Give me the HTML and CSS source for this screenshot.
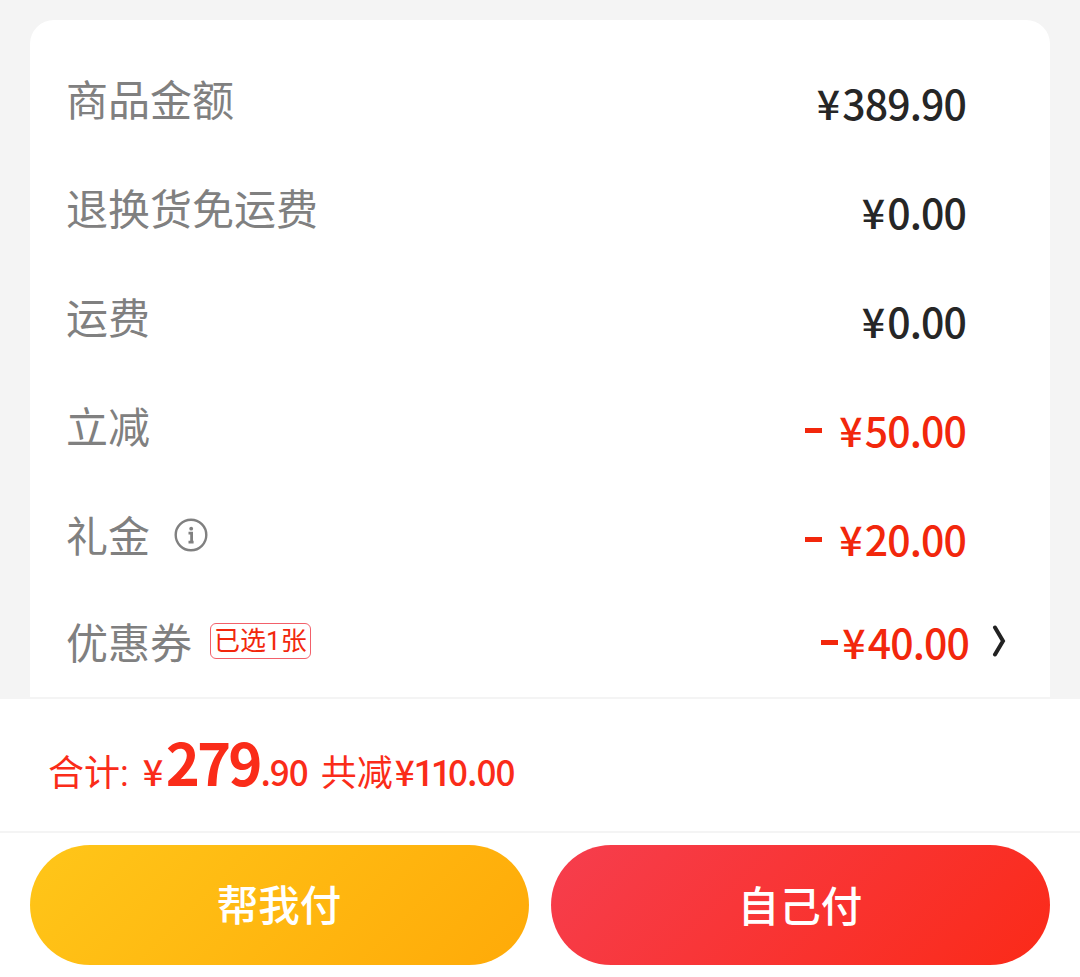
FILE: index.html
```html
<!DOCTYPE html>
<html lang="zh-CN">
  <head>
    <meta charset="UTF-8" />
    <meta name="viewport" content="width=device-width, initial-scale=1.0" />
    <title>确认订单</title>
    <link rel="stylesheet" href="styles.css">
  </head>
  <body>
    <main class="page">
      <section class="card">
        <div class="row">
          <span class="label">商品金额</span>
          <span class="price"><span class="yen">¥</span>389.90</span>
        </div>
        <div class="row">
          <span class="label">退换货免运费</span>
          <span class="price"><span class="yen">¥</span>0.00</span>
        </div>
        <div class="row">
          <span class="label">运费</span>
          <span class="price"><span class="yen">¥</span>0.00</span>
        </div>
        <div class="row">
          <span class="label">立减</span>
          <span class="price minus"><i class="dash"></i><span class="yen">¥</span>50.00</span>
        </div>
        <div class="row">
          <span class="label">礼金</span>
          <svg class="info" viewBox="0 0 34 34">
            <circle cx="17" cy="17" r="15.3" fill="none" stroke="#808080" stroke-width="2.4" />
            <circle cx="17.2" cy="10.7" r="1.9" fill="#808080" />
            <path d="M14.5 15.2H17.6V24M14.5 24.2H19.6" fill="none" stroke="#808080" stroke-width="2.8" />
          </svg>
          <span class="price minus"><i class="dash"></i><span class="yen">¥</span>20.00</span>
        </div>
        <div class="row coupon">
          <span class="label">优惠券</span>
          <span class="tag">已选1张</span>
          <span class="price minus"><i class="dash"></i><span class="yen">¥</span>40.00</span>
          <svg class="arrow" viewBox="0 0 14 32">
            <path d="M3 2.5L11 16L3 29.5" fill="none" stroke="#222" stroke-width="4" stroke-linecap="round" />
          </svg>
        </div>
      </section>
    </main>
    <section class="total">
      <span class="total-label">合计:</span>
      <span class="total-yen">¥</span>
      <span class="amount">279</span>
      <span class="cents">.90</span>
      <span class="saved">共减</span>
      <span class="saved-num">¥<span class="ones">11</span>0.00</span>
    </section>
    <footer class="actions">
      <button class="btn friend">帮我付</button>
      <button class="btn self">自己付</button>
    </footer>
  </body>
</html>
```

FILE: styles.css
```css
* {
  box-sizing: border-box;
}
body {
  margin: 0;
  height: 977px;
  overflow: hidden;
  background-color: #fff;
  font-family: Roboto, "Noto Sans CJK SC", sans-serif;
}
.page {
  height: 697px;
  padding: 20px 30px 0;
  background-color: #f4f4f4;
}
.card {
  height: 677px;
  padding: 27px 37px 0 36px;
  background-color: #fff;
  border-radius: 24px 24px 0 0;
}

/************************
  PRICE ROWS
************************/
.row {
  display: flex;
  align-items: center;
  height: 109px;
  padding-right: 46px;
}
.label {
  color: #808080;
  font-size: 42px;
  line-height: 60px;
}
.price,
.total-yen,
.amount,
.cents,
.saved-num {
  font-family: "Noto Sans CJK SC", sans-serif;
  font-weight: 500;
}
.price {
  display: flex;
  align-items: center;
  margin-left: auto;
  padding: 1px 1px 0 0;
  color: #262626;
  font-size: 41px;
  line-height: 50px;
  letter-spacing: -0.9px;
}
.yen {
  margin-right: 3px;
}
.minus {
  color: #f2270c;
}
.dash {
  width: 17px;
  height: 5px;
  margin: 3px 17px 0 0;
  background-color: #f2270c;
}
.info {
  width: 34px;
  height: 34px;
  margin: 0 0 6px 24px;
}
.coupon {
  height: 105px;
  padding-right: 7px;
}
.coupon .price {
  padding-bottom: 9px;
}
.coupon .dash {
  margin-right: 4px;
}
.tag {
  height: 36px;
  margin: 0 0 7px 18px;
  padding: 0 3px;
  border: 1px solid #f2606a;
  border-radius: 6px;
  color: #f2270c;
  font-size: 26px;
  line-height: 34px;
}
.arrow {
  width: 14px;
  height: 32px;
  margin: 0 0 7px 22px;
}

/************************
  TOTAL BAR
************************/
.total {
  display: flex;
  align-items: baseline;
  height: 136px;
  padding: 22px 48px 0;
  border-top: 2px solid #f4f4f4;
  border-bottom: 2px solid #f4f4f4;
  color: #fa2c19;
  font-size: 36px;
  line-height: 80px;
}
.total-yen {
  width: 23px;
  margin-left: 14px;
}
.total .amount {
  font-size: 58px;
  font-weight: 700;
  letter-spacing: -3px;
}
.cents {
  margin-left: 1px;
  font-size: 35px;
  letter-spacing: -1px;
}
.saved {
  margin-left: 13px;
}
.saved-num {
  margin-left: 2px;
  font-size: 35px;
  letter-spacing: -0.9px;
}
.ones {
  font-family: Roboto, sans-serif;
  font-size: 36px;
  letter-spacing: -3.4px;
}

/************************
  BUTTONS
************************/
.actions {
  display: flex;
  gap: 22px;
  padding: 12px 30px;
}
.btn {
  flex: 1;
  height: 120px;
  padding: 0 1px 5px 0;
  border: none;
  border-radius: 60px;
  color: #fff;
  font-family: inherit;
  font-size: 41.5px;
  font-weight: 500;
}
.friend {
  background: linear-gradient(135deg, #ffc619, #ffaa08);
}
.self {
  padding-bottom: 3px;
  background: linear-gradient(135deg, #f63e4e, #fb2a18);
}
```
